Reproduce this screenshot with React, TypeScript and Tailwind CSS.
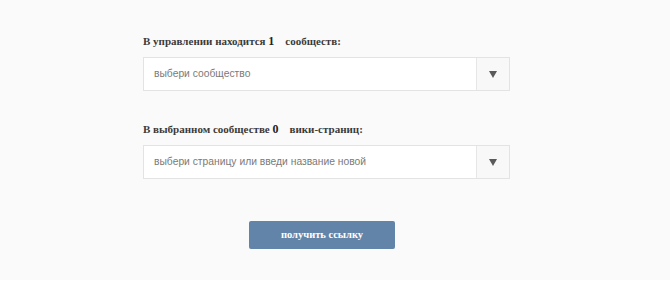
import React from "react";

function Select({ placeholder }: { placeholder: string }) {
  return (
    <div className="flex h-[34px] w-[367px] border border-[#e3e3e3] bg-white">
      <div className="flex flex-1 items-center pl-[10px] text-[10.3px] text-[#7a7a7a] [font-family:'Liberation_Sans',Arial,sans-serif]">
        {placeholder}
      </div>
      <div className="flex w-[33px] items-center justify-center border-l border-[#e6e6e6] bg-[#f8f8f8]">
        <svg width="8" height="7" viewBox="0 0 8 7">
          <path d="M0 0 H8 L4 7 Z" fill="#5a5a5a" />
        </svg>
      </div>
    </div>
  );
}

export default function App() {
  return (
    <div className="flex h-[291px] w-[670px] flex-col bg-white [font-family:'Liberation_Serif','Times_New_Roman',serif]">
      <div className="flex h-[280px] flex-col items-start bg-[#fafafa] pl-[143px] pt-[33px]">
        <div className="text-[11px] font-bold leading-[16px] text-[#3a3a3a]">
          В управлении находится <span className="text-[12px] text-[#222]">1</span>
          <span className="ml-[11px]">сообществ:</span>
        </div>
        <div className="mt-[8px]">
          <Select placeholder="выбери сообщество" />
        </div>
        <div className="mt-[30px] text-[11px] font-bold leading-[16px] text-[#3a3a3a]">
          В выбранном сообществе <span className="text-[12px] text-[#222]">0</span>
          <span className="ml-[11px]">вики-страниц:</span>
        </div>
        <div className="mt-[8px]">
          <Select placeholder="выбери страницу или введи название новой" />
        </div>
        <button className="ml-[106px] mt-[42px] flex h-[28px] w-[146px] items-center justify-center rounded-[2px] bg-[#6384a9] text-[10.5px] font-bold text-white">
          получить ссылку
        </button>
      </div>
    </div>
  );
}
